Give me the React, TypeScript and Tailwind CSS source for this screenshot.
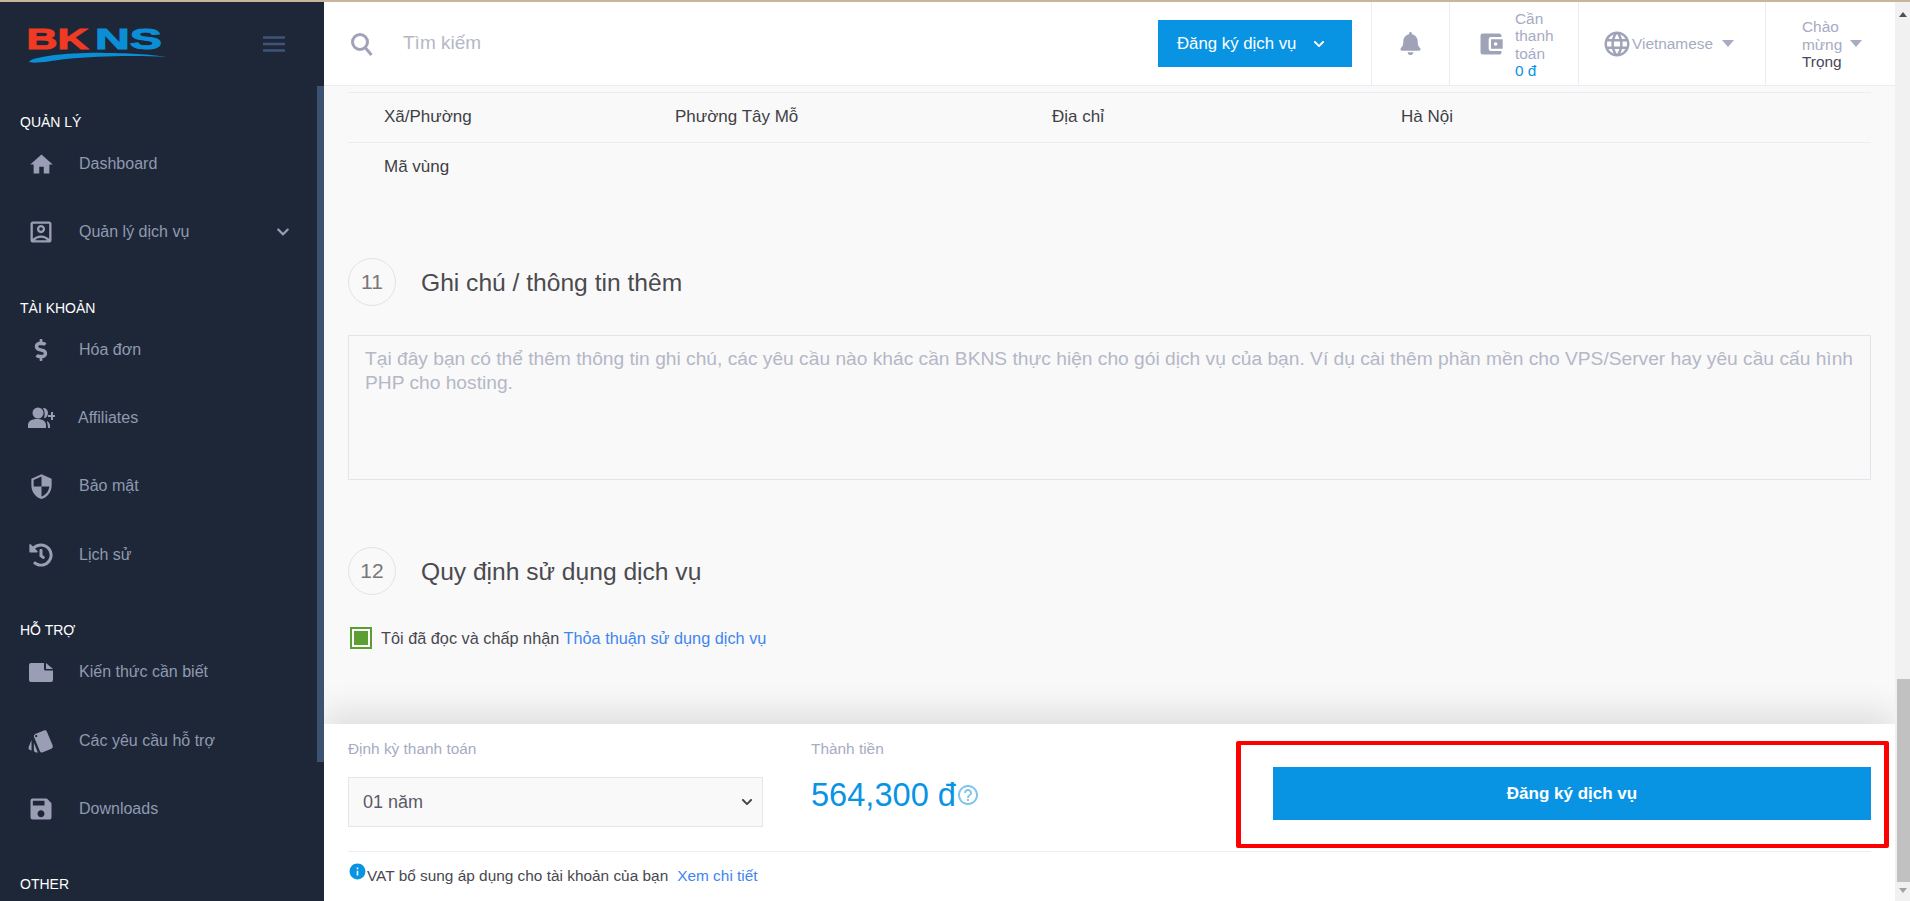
import React from "react";
import { FaDollarSign, FaHistory, FaBell, FaChevronDown } from "react-icons/fa";
import { MdHome, MdLanguage, MdSecurity, MdStyle, MdSave, MdAccountBalanceWallet, MdOutlineAccountBox, MdInfo, MdHelpOutline } from "react-icons/md";

const Logo = () => (
  <svg width="145" height="44" viewBox="0 0 145 44" className="block">
    <text x="0.5" y="28" fontFamily="'Liberation Sans',sans-serif" fontWeight="700" fontSize="30" fill="#f03a24" stroke="#f03a24" strokeWidth="1" textLength="62" lengthAdjust="spacingAndGlyphs">BK</text>
    <text x="69" y="28" fontFamily="'Liberation Sans',sans-serif" fontWeight="700" fontSize="30" fill="#0a8fd6" stroke="#0a8fd6" strokeWidth="1" textLength="67" lengthAdjust="spacingAndGlyphs">NS</text>
    <path d="M3 41 C6 35 50 31 80 32 C104 32 130 34 141 36 C110 34 70 35 40 38 C24 40 8 43 3 41 Z" fill="#0a8fd6" />
  </svg>
);

const Section = ({ label, className }: { label: string; className: string }) => (
  <div className={`pl-[20px] text-[14px] leading-[20px] text-white ${className}`}>{label}</div>
);

const Item = ({ icon, label, chevron, textClass, className }: { icon: React.ReactNode; label: string; chevron?: boolean; textClass?: string; className: string }) => (
  <div className={`flex h-[24px] items-center text-[16px] text-[#8f9ab0] ${className}`}>
    <div className="-mr-[3px] flex w-[82px] shrink-0 justify-center text-[#9a9eb4]">{icon}</div>
    <span className={textClass}>{label}</span>
    {chevron && <FaChevronDown className="ml-auto mr-[27px] text-[14px] text-[#9a9eb4]" />}
  </div>
);

const Caret = () => <span className="inline-block h-0 w-0 border-x-[6px] border-t-[7px] border-x-transparent border-t-[#a7abc3]" />;

const Num = ({ n, title, className }: { n: number; title: string; className: string }) => (
  <div className={`flex items-center ${className}`}>
    <div className="flex h-[48px] w-[48px] items-center justify-center rounded-full border border-[#e3e3e3] text-[21px] text-[#777777]">{n}</div>
    <div className="ml-[25px] pt-[2px] text-[24.6px] text-[#4a4a4f]">{title}</div>
  </div>
);

export default function App() {
  return (
    <div className="flex h-[901px] w-[1910px] flex-col overflow-hidden bg-white font-['Liberation_Sans',Arial,sans-serif]">
      <div className="h-[2px] bg-[#c9b69a]" />
      <div className="flex min-h-0 flex-1">
        <aside className="relative z-10 flex w-[324px] shrink-0 flex-col bg-[#1e2738]">
          <div className="flex h-[84px] items-start justify-between pl-[26px] pr-[39px] pt-[19px]">
            <Logo />
            <svg width="22" height="16" viewBox="0 0 22 16" className="mt-[15px]"><path d="M0 1.5h22M0 8h22M0 14.5h22" stroke="#3f5478" strokeWidth="2.4" /></svg>
          </div>
          <div className="flex min-h-0 flex-1">
            <nav className="min-w-0 flex-1 pt-[26px]">
              <Section label="QUẢN LÝ" className="" />
              <Item className="mt-[20px]" icon={<MdHome className="shrink-0 text-[27px]" />} label="Dashboard" />
              <Item className="mt-[44px]" icon={<MdOutlineAccountBox className="shrink-0 text-[28px]" />} label="Quản lý dịch vụ" chevron />
              <Section label="TÀI KHOẢN" className="mt-[54px]" />
              <Item className="mt-[20px]" icon={<FaDollarSign className="shrink-0 text-[22px]" />} label="Hóa đơn" />
              <Item className="mt-[44px]" textClass="-ml-[1px]" icon={<svg width="28" height="22" viewBox="0 0 28 22" fill="currentColor" className="shrink-0"><circle cx="11" cy="6" r="5.5" /><path d="M1 21v-3c0-4 4-6 9-6s9 2 9 6v3z" /><path d="M16 1c3 0 5 2 5 5s-2 5-4 5c1-3 1-7-1-10zM20 14c2 1 3 3 3 5v2h-2c0-3-1-5-1-7z" /><path d="M24 5h2v3h3v2h-3v3h-2v-3h-3V8h3z" /></svg>} label="Affiliates" />
              <Item className="mt-[44px]" icon={<MdSecurity className="shrink-0 text-[27px]" />} label="Bảo mật" />
              <Item className="mt-[45px]" icon={<FaHistory className="shrink-0 text-[24px]" />} label="Lịch sử" />
              <Section label="HỖ TRỢ" className="mt-[53px]" />
              <Item className="mt-[20px]" icon={<svg width="24" height="20" viewBox="0 0 24 20" fill="currentColor" className="shrink-0"><path d="M2 1h13v6a1.5 1.5 0 0 0 1.5 1.5H24V18a2 2 0 0 1-2 2H2a2 2 0 0 1-2-2V3a2 2 0 0 1 2-2zM17 1l7 6h-7z" /></svg>} label="Kiến thức cần biết" />
              <Item className="mt-[45px]" icon={<MdStyle className="shrink-0 text-[28px]" />} label="Các yêu cầu hỗ trợ" />
              <Item className="mt-[44px]" icon={<MdSave className="shrink-0 text-[28px]" />} label="Downloads" />
              <Section label="OTHER" className="mt-[53px]" />
            </nav>
            <div className="h-[676px] w-[7px] shrink-0 bg-[#3d5170]" />
          </div>
        </aside>

        <div className="flex min-w-0 flex-1 flex-col bg-[#f9f9f9]">
          <header className="flex h-[84px] shrink-0 items-stretch border-b border-[#ebedf2] bg-white">
            <div className="flex flex-1 items-center pl-[26px]">
              <svg width="24" height="24" viewBox="0 0 24 24" fill="none" stroke="#a0a3b8" strokeWidth="3" className="shrink-0"><circle cx="10" cy="10" r="7.5" /><path d="M15.5 16l6 7" /></svg>
              <span className="ml-[29px] text-[19px] text-[#b4b7c7]">Tìm kiếm</span>
            </div>
            <button className="my-[18px] mr-[19px] flex h-[47px] w-[194px] items-center bg-[#0994e3] pl-[19px] text-[16.8px] text-white">
              Đăng ký dịch vụ
              <FaChevronDown className="ml-[17px] text-[12px]" />
            </button>
            <div className="flex w-[78px] items-center justify-center border-l border-[#ebedf2] text-[#a0a3b8]"><FaBell className="text-[23px]" /></div>
            <div className="flex w-[129px] items-center border-l border-[#ebedf2] pl-[27px]">
              <MdAccountBalanceWallet className="shrink-0 text-[28px] text-[#a0a3b8]" />
              <div className="ml-[10px] mt-[2px] w-[50px] text-[15.4px] leading-[17.5px] text-[#a7abc3]">Cần thanh toán<div className="text-[#0994e3]">0 đ</div></div>
            </div>
            <div className="flex w-[187px] items-center border-l border-[#ebedf2] pl-[23px] text-[15.4px] text-[#a7abc3]">
              <MdLanguage className="shrink-0 text-[30px] text-[#a0a3b8]" />
              <span className="mr-[9px]">Vietnamese</span>
              <Caret />
            </div>
            <div className="flex w-[130px] items-center border-l border-[#ebedf2] pl-[36px]">
              <div className="mt-[2px] w-[42px] text-[15.4px] leading-[17.5px] text-[#a7abc3]">Chào mừng<div className="text-[#48465b]">Trọng</div></div>
              <div className="ml-[6px] -mt-[3px]"><Caret /></div>
            </div>
          </header>

          <main className="min-h-0 flex-1 overflow-hidden px-[24px] pt-[6px] text-[17px] text-[#3f3f46]">
            <div className="grid h-[50px] grid-cols-[291px_377px_349px_1fr] items-center border-t border-[#ebedf2] pb-[1px] pl-[36px]">
              <span>Xã/Phường</span><span>Phường Tây Mỗ</span><span>Địa chỉ</span><span>Hà Nội</span>
            </div>
            <div className="flex h-[50px] items-center border-t border-[#ebedf2] pb-[2px] pl-[36px]">Mã vùng</div>
            <Num n={11} title="Ghi chú / thông tin thêm" className="mt-[66px]" />
            <div className="mt-[29px] h-[145px] border border-[#e2e5ec] pb-[11px] pl-[16px] pr-[8px] pt-[11px] text-[19.2px] leading-[24px] text-[#b4b7c7]">
              Tại đây bạn có thể thêm thông tin ghi chú, các yêu cầu nào khác cần BKNS thực hiện cho gói dịch vụ của bạn. Ví dụ cài thêm phần mền cho VPS/Server hay yêu cầu cấu hình PHP cho hosting.
            </div>
            <Num n={12} title="Quy định sử dụng dịch vụ" className="mt-[67px]" />
            <div className="mt-[31px] flex items-center text-[16.3px] text-[#48484f]">
              <div className="ml-[2px] flex h-[22px] w-[22px] items-center justify-center border-[2px] border-[#5b9e31] bg-white"><div className="h-[14px] w-[14px] bg-[#5b9e31]" /></div>
              <span className="ml-[9px]">Tôi đã đọc và chấp nhận <span className="text-[#3f85f0]">Thỏa thuận sử dụng dịch vụ</span></span>
            </div>
          </main>

          <footer className="relative h-[177px] shrink-0 bg-white px-[24px] shadow-[0_-14px_30px_0_rgba(0,0,0,0.1)]">
            <div className="flex h-[128px] border-b border-[#ebedf2]">
              <div className="w-[415px] shrink-0">
                <div className="pt-[16px] text-[15.4px] leading-[18px] text-[#a7abc3]">Định kỳ thanh toán</div>
                <div className="mt-[19px] flex h-[50px] items-center justify-between border border-[#e2e5ec] bg-[#f9f9f9] pl-[14px] pr-[9px] text-[18px] text-[#5a5a6b]">
                  01 năm
                  <FaChevronDown className="text-[12px] text-[#444]" />
                </div>
              </div>
              <div className="ml-[48px] w-[462px] shrink-0">
                <div className="pt-[16px] text-[15.4px] leading-[18px] text-[#a7abc3]">Thành tiền</div>
                <div className="mt-[18px] flex items-center text-[32.6px] leading-[38px] text-[#0994e3]">564,300 đ<MdHelpOutline className="text-[24px] text-[#7fc4ef]" /></div>
              </div>
              <div className="relative mt-[43px] h-[53px] flex-1">
                <button className="flex h-full w-full items-center justify-center bg-[#0994e3] text-[17px] font-bold text-white">Đăng ký dịch vụ</button>
                <div className="absolute -bottom-[28px] -left-[37px] -right-[18px] -top-[26px] rounded-[2px] border-x-[5px] border-y-[4.5px] border-[#ff0000]" />
              </div>
            </div>
            <div className="flex pt-[12px] text-[15.4px] leading-[24px] text-[#48484f]">
              <MdInfo className="-mt-[2px] shrink-0 text-[19px] text-[#0994e3]" />
              <span>VAT bổ sung áp dụng cho tài khoản của bạn</span>
              <span className="ml-[9px] text-[#3f85f0]">Xem chi tiết</span>
            </div>
          </footer>
        </div>

        <div className="relative z-10 flex w-[15px] shrink-0 flex-col items-center bg-[#f1f1f1]">
          <div className="mt-[10px] h-0 w-0 border-x-[4px] border-b-[5px] border-x-transparent border-b-[#505050]" />
          <div className="ml-[2px] mt-[662px] h-[203px] w-[13px] bg-[#c1c1c1]" />
          <div className="mt-[6px] h-0 w-0 border-x-[4px] border-t-[5px] border-x-transparent border-t-[#a3a3a3]" />
        </div>
      </div>
    </div>
  );
}
